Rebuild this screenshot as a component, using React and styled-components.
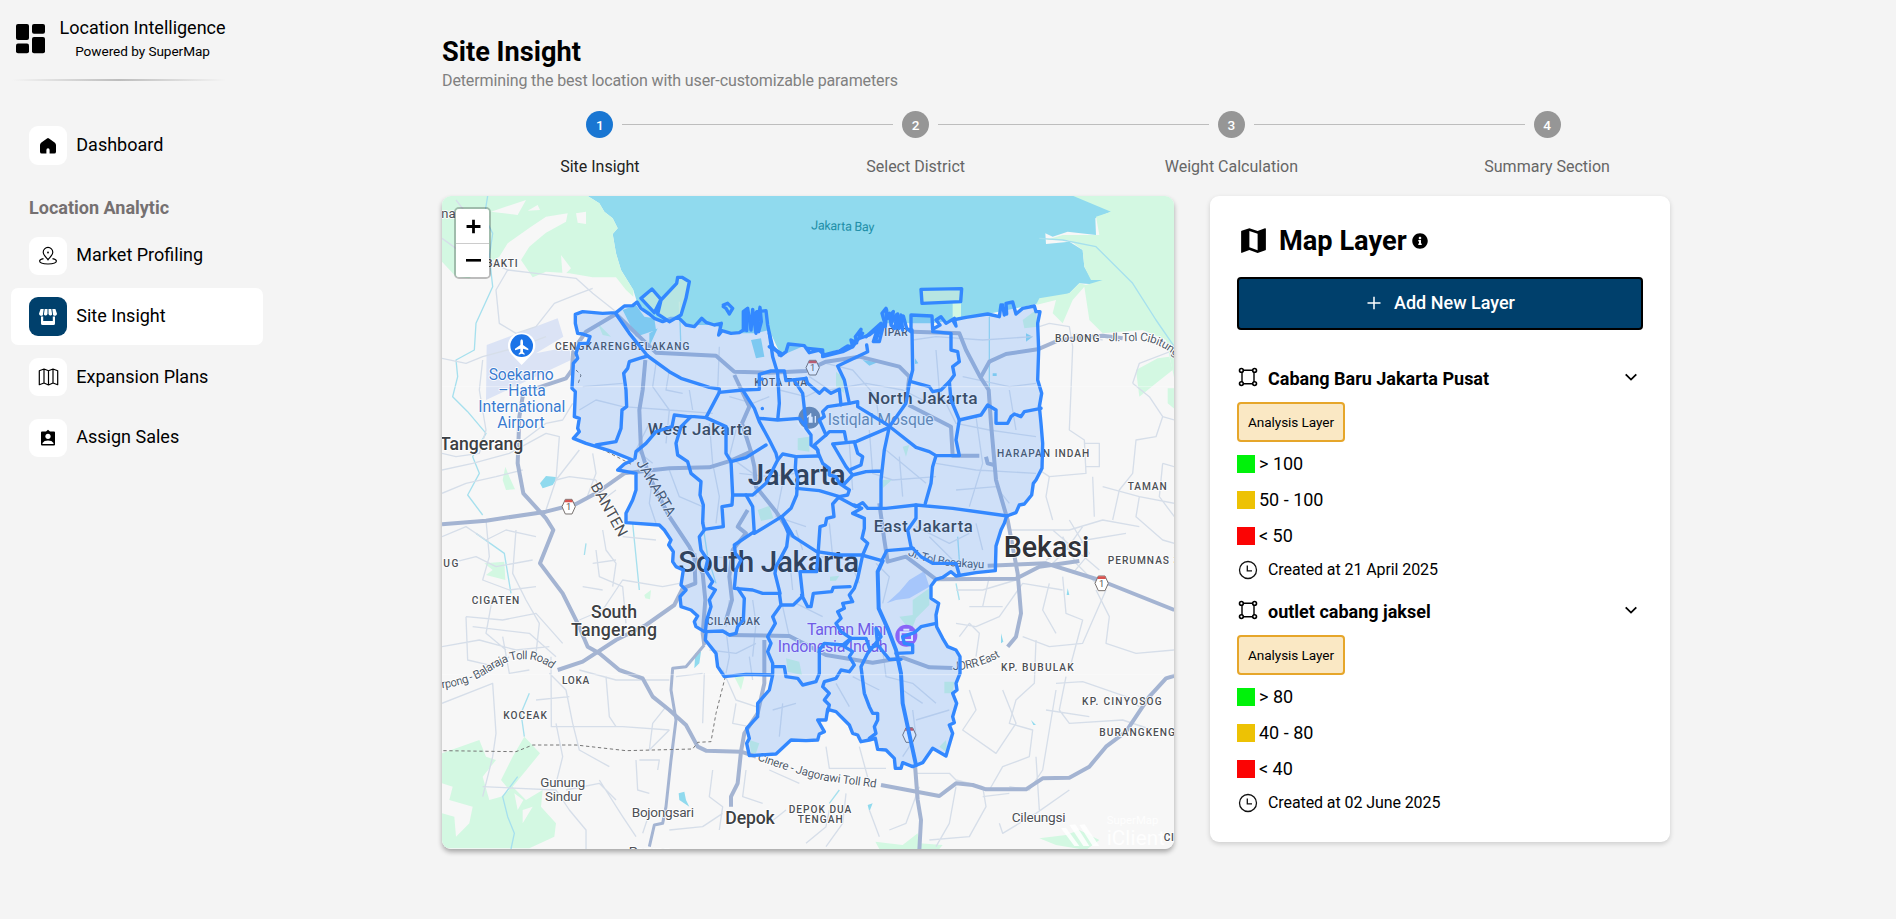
import React from "react";
import styled, { createGlobalStyle } from "styled-components";
import { MdMap } from "react-icons/md";
import { FaInfoCircle } from "react-icons/fa";

const GlobalStyle = createGlobalStyle`
  *, *::before, *::after { box-sizing: border-box; }
  body {
    margin: 0;
    background: #f4f4f4;
    color: #000;
    font-family: Roboto, "Liberation Sans", sans-serif;
    overflow: hidden;
  }
`;

/* ---------- Page shell ---------- */

const Page = styled.div`
  display: flex;
  height: 919px;
`;

const Sidebar = styled.aside`
  width: 442px;
  flex: none;
`;

const Brand = styled.div`
  display: flex;
  align-items: center;
  gap: 14.5px;
  height: 76px;
  padding: 1px 0 0 16px;
  svg { flex: none; }
`;

const BrandText = styled.div`
  display: flex;
  flex-direction: column;
  align-items: center;
  padding-top: 2px;
`;

const BrandName = styled.div`
  font-size: 18px;
  line-height: 24px;
`;

const BrandNote = styled.div`
  font-size: 13.6px;
  line-height: 23px;
  letter-spacing: -0.05px;
`;

const Divider = styled.div`
  width: 214px;
  height: 2px;
  margin: 3px 0 0 12px;
  background: linear-gradient(to right, transparent, #bdbdbd, transparent);
`;

const Nav = styled.nav`
  display: flex;
  flex-direction: column;
  gap: 3.6px;
  width: 263px;
  padding: 36px 0 0 11px;
`;

const NavHeading = styled.div`
  padding-left: 18px;
  margin: 16.6px 0 1.7px;
  height: 28px;
  line-height: 28px;
  font-size: 18px;
  font-weight: 700;
  color: #757071;
`;

const NavItem = styled.a`
  display: flex;
  align-items: center;
  gap: 9.3px;
  height: 57px;
  padding-left: 18px;
  border-radius: 7px;
  font-size: 18px;
  background: ${(p) => (p.$active ? "#fff" : "transparent")};
`;

const NavText = styled.span`
  padding-bottom: 2px;
`;

const NavIcon = styled.span`
  display: flex;
  align-items: center;
  justify-content: center;
  width: 38px;
  height: 38.5px;
  border-radius: 9px;
  color: ${(p) => (p.$active ? "#fff" : "#000")};
  background: ${(p) => (p.$active ? "#00406c" : "#fff")};
`;

const Main = styled.main`
  width: 1263px;
  padding-top: 36px;
`;

const Title = styled.h1`
  margin: 0;
  font-size: 27.2px;
  line-height: 32px;
  font-weight: 700;
`;

const Subtitle = styled.p`
  margin: 0;
  font-size: 16px;
  line-height: 25px;
  letter-spacing: -0.12px;
  color: #808080;
`;

/* ---------- Stepper ---------- */

const StepperRow = styled.div`
  display: flex;
  margin-top: 18px;
  height: 85px;
`;

const StepBox = styled.div`
  flex: 1;
  display: flex;
  flex-direction: column;
`;

const StepTrack = styled.div`
  display: flex;
  align-items: center;
  gap: 9px;
`;

const StepLine = styled.span`
  flex: 1;
  height: 1px;
  background: ${(p) => (p.$hidden ? "transparent" : "#bdbdbd")};
`;

const StepDot = styled.span`
  width: 27px;
  height: 27px;
  border-radius: 50%;
  font-size: 13.6px;
  font-weight: 500;
  line-height: 28px;
  text-align: center;
  color: #fff;
  background: ${(p) => (p.$active ? "#1976d2" : "#969696")};
`;

const StepLabel = styled.span`
  margin-top: 17px;
  font-size: 16px;
  line-height: 24px;
  text-align: center;
  color: ${(p) => (p.$active ? "#212121" : "#666")};
`;

/* ---------- Content ---------- */

const Content = styled.div`
  display: flex;
  align-items: flex-start;
  gap: 36px;
`;

const MapFrame = styled.div`
  position: relative;
  width: 732px;
  height: 653px;
  border-radius: 9px;
  overflow: hidden;
  box-shadow: 0 3px 5px rgba(0, 0, 0, 0.32);
  svg { display: block; }
`;

const ZoomControl = styled.div`
  position: absolute;
  left: 12px;
  top: 11px;
  width: 37px;
  border: 2px solid rgba(0, 0, 0, 0.24);
  border-radius: 5px;
  background-clip: padding-box;
  overflow: hidden;
`;

const ZoomButton = styled.button`
  display: flex;
  align-items: center;
  justify-content: center;
  width: 33px;
  height: 34px;
  padding: 0 0 0 2px;
  border: 0;
  background: #fff;
  & + & { border-top: 1px solid #ccc; }
`;

const Panel = styled.section`
  width: 460px;
  height: 646px;
  padding: 27px;
  border-radius: 9px;
  background: #fff;
  box-shadow: 0 2px 5px rgba(0, 0, 0, 0.16);
`;

const PanelTitle = styled.h2`
  display: flex;
  align-items: center;
  margin: 0 0 18px;
  height: 36px;
  font-size: 27.2px;
  font-weight: 700;
  svg { margin-top: -1px; }
`;

const PanelTitleText = styled.span`
  margin: 0 5px 0 9px;
`;

const AddButton = styled.button`
  display: flex;
  align-items: center;
  justify-content: center;
  gap: 13px;
  width: 406px;
  height: 53px;
  padding: 0 0 2px 2px;
  border: 2px solid #000;
  border-radius: 4px;
  background: #00406c;
  color: #fff;
  font: 500 18px Roboto, sans-serif;
`;

const Layers = styled.div`
  padding-top: 29px;
`;

const Layer = styled.article`
  height: 233.2px;
`;

const LayerHead = styled.div`
  display: flex;
  align-items: center;
  height: 36px;
  padding: 0 5px 0 1px;
`;

const LayerName = styled.h3`
  flex: 1;
  margin: 3px 0 0 10px;
  font-size: 18px;
  font-weight: 700;
`;

const Badge = styled.span`
  display: flex;
  align-items: center;
  justify-content: center;
  width: 108px;
  height: 40px;
  margin: 7px 0 4px;
  border: 2px solid #e6a62a;
  border-radius: 4px;
  background: #fae8c4;
  font-size: 13.6px;
  letter-spacing: -0.08px;
`;

const LegendRow = styled.div`
  display: flex;
  align-items: center;
  gap: 4px;
  height: 36px;
  font-size: 18px;
`;

const LegendText = styled.span`
  padding-bottom: 1.5px;
`;

const Swatch = styled.span`
  width: 18px;
  height: 18px;
  background: ${(p) => p.$color};
`;

const Created = styled.div`
  display: flex;
  align-items: center;
  gap: 10px;
  height: 32px;
  padding-left: 1px;
  font-size: 16px;
  letter-spacing: -0.09px;
`;

const CreatedText = styled.span`
  padding-bottom: 1.5px;
`;

/* ---------- Icons ---------- */

const DashboardIcon = () => (
  <svg width="29" height="30" viewBox="0 0 29 30">
    <rect width="13" height="16" rx="2" />
    <rect y="19.5" width="13" height="9.7" rx="2" />
    <rect x="16" width="13" height="9.7" rx="2" />
    <rect x="16" y="13" width="13" height="16.2" rx="2" />
  </svg>
);

const HomeIcon = () => (
  <svg width="20" height="20" viewBox="0 0 20 20" fill="currentColor">
    <path d="M9 2.4Q10 1.6 11 2.4L16.6 6.4Q18 7.4 18 9V15.7Q18 17.6 16.2 17.6H11.6V14Q11.6 12.3 10 12.3T8.4 14V17.6H3.8Q2 17.6 2 15.7V9Q2 7.4 3.4 6.4Z" />
  </svg>
);

const PinIcon = () => (
  <svg width="20" height="20" viewBox="0 0 20 20" fill="none" stroke="currentColor" strokeWidth="1.15">
    <path d="M10 13.800C8.200 11.400 5.200 8.900 5.200 6.200a4.800 4.800 0 0 1 9.600 0C14.800 8.900 11.800 11.400 10 13.800Z" />
    <circle cx="10" cy="6.500" r=".9" fill="currentColor" stroke="none" />
    <path d="M5.500 12.600C3.100 13.100 1.600 14 1.600 15.100C1.600 17 5 18 10 18S18.400 17 18.400 15.100C18.400 14 16.900 13.100 14.500 12.600" />
  </svg>
);

const StoreIcon = () => (
  <svg width="20" height="20" viewBox="0 0 20 20" fill="currentColor">
    <path d="M2.600 2H5.700L4.900 8A2.200 2.200 0 0 1 1 6.800Z" />
    <path d="M6.700 2H9.500V7A2 2 0 0 1 5.900 7.500Z" />
    <path d="M10.500 2H13.300L14.100 7.500A2 2 0 0 1 10.500 7Z" />
    <path d="M14.300 2H17.400L19 6.800A2.200 2.200 0 0 1 15.100 8Z" />
    <path d="M3 9.500H5.200V14H14.800V9.500H17V16.500Q17 18 15.500 18H4.500Q3 18 3 16.500Z" />
  </svg>
);

const MapOutlineIcon = () => (
  <svg width="21" height="20" viewBox="0 0 21 20" fill="none" stroke="currentColor" strokeWidth="1.2" strokeLinejoin="round">
    <path d="M1.300 3.800 6 2 10.500 3.800 15 2 19.700 3.800V17.700L15 16 10.500 18 6 16 1.300 17.700ZM6 2V16M10.500 3.800V18M15 2V16" />
  </svg>
);

const BadgeIcon = () => (
  <svg width="20" height="20" viewBox="0 0 20 20">
    <path fill="currentColor" d="M4 3.500H8L10 1.700 12 3.500H16Q17 3.500 17 4.500V16.500Q17 17.500 16 17.500H4Q3 17.500 3 16.500V4.500Q3 3.500 4 3.500Z" />
    <circle cx="10" cy="8.300" r="2.600" fill="#fff" />
    <path d="M4.500 16V15Q6 12.600 10 12.600T15.500 15V16Z" fill="#fff" />
  </svg>
);

const PolygonIcon = () => (
  <svg width="20" height="20" viewBox="0 0 20 20" fill="none" stroke="#000" strokeWidth="1.400">
    <path d="M5 3.200H15M5 16.800H15M4 5V15M16 5V15" />
    {[3.4, 16.6].map((x) => [3.4, 16.6].map((y) => (
      <circle key={`${x}-${y}`} cx={x} cy={y} r="1.9" strokeWidth="1.6" />
    )))}
  </svg>
);

const ClockIcon = () => (
  <svg width="20" height="20" viewBox="0 0 20 20" fill="none" stroke="#111" strokeWidth="1.3">
    <circle cx="10" cy="10" r="8.5" />
    <path d="M9.300 5.500V10.800H14" />
  </svg>
);

const ChevronIcon = () => (
  <svg width="14" height="12" viewBox="0 0 14 12" fill="none" stroke="#000" strokeWidth="1.8">
    <path d="M1.700 3.300 7 8.600 12.300 3.300" />
  </svg>
);

const PlusIcon = ({ size = 14, weight = 1.5 }) => (
  <svg width={size} height={size} viewBox="0 0 14 14" stroke="currentColor" strokeWidth={weight}>
    <path d="M7 .8V13.200M.5 7H13.500" />
  </svg>
);

/* ---------- Map ---------- */

const MapSvg = styled.svg`
  background: #f7f7f7;
  font-family: Roboto, sans-serif;
`;

const LabelText = styled.text`
  font-size: ${(p) => p.$size}px;
  font-weight: ${(p) => p.$weight};
  fill: ${(p) => p.$color};
  stroke: ${(p) => p.$halo || "#fff"};
  stroke-width: 5px;
  stroke-linejoin: round;
  paint-order: stroke;
`;

const Label = ({ x, y, w, size = 30.5, weight = 500, color = "#4d5055", halo, turn, children }) => (
  <LabelText x={x} y={y} textLength={w} $size={size} $weight={weight} $color={color} $halo={halo}
    transform={turn ? `rotate(${turn} ${x} ${y})` : undefined}>
    {children}
  </LabelText>
);

const PathLabel = ({ id, d, w, children }) => (
  <>
    <path id={id} d={d} fill="none" />
    <LabelText $size={35} $weight={400} $color="#4f5a68">
      <textPath href={`#${id}`} textLength={w}>{children}</textPath>
    </LabelText>
  </>
);

const Shield = ({ x, y }) => (
  <g transform={`translate(${x} ${y})`}>
    <path d="M-10-22H10L20 0 10 22H-10L-20 0Z" fill="#fff" stroke="#77716f" strokeWidth="3" />
    <path d="M-10-21H10L13-13H-13Z" fill="#d9534f" />
    <text y="11" textAnchor="middle" fontSize="28" fill="#555">1</text>
  </g>
);

const GREENS = [
  "M18 18H455L490 40 505 65 530 85 545 115 530 132 540 190 555 240 592 300 592 320 570 300 540 262 470 262 400 250 330 245 290 262 255 210 280 170 310 145 330 128 390 95 395 70 330 80 285 110 215 160 190 200 150 225 100 265 60 260 18 215Z",
  "M1912 18H2220V590L2205 520 2190 450 2120 420 2000 430 1960 390 1945 290 1910 330 1880 400 1850 370 1860 330 1800 345 1810 325 1900 310 1930 280 1950 285 2000 270 1965 270 1945 230 1940 180 1900 150 1830 150 1880 135 1990 135 1980 80 2025 65Z",
  "M2100 540 2165 505 2200 500 2210 540 2160 580 2110 620Z M2195 595H2220V660L2195 640Z",
  "M312 518 355 486 378 500 325 535Z M208 830 220 860 237 898 210 900 200 870Z M145 1120 205 1115 208 1170 150 1155 170 1140Z M625 1215 645 1200 642 1228 628 1225Z",
  "M18 1690 130 1650 150 1700 180 1710 140 1760 160 1830 195 1820 220 1800 195 1770 230 1700 265 1640 312 1690 230 1790 270 1830 320 1800 315 1850 360 1900 355 1940 280 1975H18Z",
  "M895 1460 925 1460 915 1500Z M1318 1955 1400 1965 1445 1930 1450 1960 1520 1965 1510 1977H1330Z M1810 1945 1890 1935 1930 1920 1990 1950 1950 1980 1860 1965Z",
  "M485 400 525 440 500 435Z M1550 340H1575V390H1550Z M1400 770 1420 765 1410 800Z M1340 870 1370 868 1340 895Z M965 960 1000 947 1012 985 975 993Z M1085 745 1120 740 1120 785 1085 780Z",
  "M1390 1280 1430 1275 1430 1230 1480 1195 1480 1245 1440 1285 1425 1325Z M1525 1475H1555L1550 1510 1525 1510Z M1510 1670 1530 1650 1535 1690Z M940 1650 970 1660 960 1690 945 1690Z M1050 1405 1090 1415 1098 1455 1055 1445Z M1200 545 1220 560 1225 610 1200 590Z M1760 390 1800 360 1805 410 1765 415Z M1182 1160 1210 1157 1200 1172 1182 1173Z",
];

const INLETS = [
  "M560 360 600 345 625 380 655 385 660 420 600 440 580 400Z M945 450 975 445 985 500 960 505Z M640 430 665 415 640 470Z",
  "M1280 510 1325 517 1300 527Z M1437 505 1447 520 1437 522Z M1670 550H1682V558H1670Z M1770 430 1790 440 1770 455Z",
  "M312 880 330 858 365 862 350 885 320 895Z M778 1390 795 1385 790 1420 775 1435Z M728 1810 745 1805 750 1830 760 1850 730 1830Z",
  "M1295 1845 1310 1840 1300 1865Z M1785 1590 1800 1605 1792 1605Z M1895 1195 1900 1215 1892 1215Z M1695 1330 1702 1355 1695 1360Z M1138 60 1160 57 1155 66Z",
];

const STREAMS = [
  "M155 18 145 80 170 130 160 200 170 290 120 400 115 480 60 510 65 560 50 620 95 665 150 730 110 800 130 850 95 915 140 975",
  "M1810 145 1880 150 1980 170 2090 280 2160 390 2215 470",
  "M730 335 735 480M590 1000 610 1200M120 1030 205 1090 225 1210M265 1640 255 1570 280 1510M245 1760 200 1820 215 1880 235 1930 225 1977",
  "M800 1000 815 1100 840 1180M1565 1040 1570 1110M450 1060 445 1095M1210 1800 1180 1840M1560 1180 1570 1230M1660 380 1660 650",
];

const MINOR = [
  "M18 145 60 175 105 205 160 215 215 240 300 250 420 265 470 310 540 365M215 240 180 300 190 400 240 430 300 410 355 340 430 310 470 295M60 30 110 95 160 80",
  "M18 505 90 520 140 500 250 470 330 440M140 510 130 600 150 720 130 790 60 800 18 790M18 840 110 820 220 790 330 730 370 740 360 870 400 860 480 870M250 760 330 700 380 690 410 640",
  "M18 910 90 880 180 860 260 840M330 960 360 870 430 780M480 870 500 930 540 900M470 790 480 850 450 930",
  "M440 590 560 580M430 660 480 630 560 650 700 660 830 670M660 520 650 590 700 660 690 760M700 540 690 600 740 610M640 700 600 780 650 820",
  "M760 600 770 660M850 470 845 600M880 620 950 640 1000 620M820 700 830 820 850 920 840 1000M900 720 880 800 950 850 960 920",
  "M650 860 640 940 660 1000M700 840 730 920 800 950M910 850 1000 860 1080 850M1030 600 1110 620 1150 600M1040 880 1020 980 1110 1010",
  "M1120 560 1180 600 1290 580 1400 600 1480 640M1170 520 1250 540 1320 620 1330 700M1430 450 1500 440 1640 450 1790 440M1580 560 1720 590 1800 580M1500 480 1510 600 1560 700 1660 720 1800 740",
  "M1240 760 1250 900M1300 720 1310 850 1370 870 1500 860M1350 780 1470 880M1390 800 1400 920M1500 820 1620 840 1800 850M1620 680 1640 820 1600 950M1720 600 1740 720M1560 900 1680 890 1720 940",
  "M1810 410 1840 400 1900 410 1910 470 1905 600 1900 720 1945 750 1950 850 1840 860 1810 840M1945 760H1990V830H1950",
  "M1910 430 2000 450M2090 580 2110 520 2215 480M2090 580 2140 620 2180 680 2160 740 2100 750 2090 850 2050 900 2030 990M2180 680 2215 690M1840 860 1830 920 1850 990",
  "M1970 860 1975 980M2000 890 2110 920 2215 940M2110 920 2100 980 2180 1050 2215 1060M2180 820 2215 830M2180 820 2170 920 2215 980",
  "M1720 1020 1900 1020 2000 990 2110 1010M1880 1040 1920 1120 1980 1180M1940 1010 1890 1080 1840 1130M1900 990 1960 1090 1910 1150M1850 1020 1990 1140M1830 1110 1950 1050 2070 1030",
  "M1560 1300 1620 1310 1690 1280 1760 1180 1880 1200M1570 1340 1600 1300 1630 1330 1620 1400M1760 1340 1840 1370 1940 1360 2010 1200M1880 1160 1890 1270 1940 1290 1900 1440",
  "M1980 1200 2020 1280 2010 1360 2100 1390 2215 1380M1560 1200 1640 1200 1740 1170M1600 1250 1700 1250M1660 1160 1640 1250M1840 1180 1820 1260 1860 1330",
  "M1800 1350 1795 1480 1740 1530 1720 1600 1790 1620 1780 1700 1700 1730 1660 1800M1860 1500 1840 1620 1820 1740 1780 1800 1720 1790",
  "M1890 1460 1870 1560 1900 1600 2060 1590 2150 1620M1860 1480 1940 1475 2070 1520 2110 1550M1830 1560 1960 1580M1600 1500 1620 1560 1580 1620 1680 1690 1740 1600 1700 1500",
  "M1440 1750 1540 1750 1560 1770 1640 1790 1650 1850 1600 1940 1480 1950M1640 1820 1720 1810M1560 1790 1540 1900 1500 1970M1690 1900 1700 1930 1800 1870 1900 1800M1800 1700 1810 1860",
  "M1170 1670 1180 1735 1350 1735M1270 1670 1300 1780M1180 1860 1170 1910 1110 1960M1230 1810 1220 1900 1170 1970M1300 1860 1330 1940M1360 1920 1410 1900 1450 1790",
  "M18 1040 90 1010 150 1050 210 1020 300 1040M150 990 160 1100 140 1170 220 1200 300 1190M40 1120 120 1100 180 1130 290 1110M240 1020 230 1150 270 1230 310 1300 300 1390",
  "M90 1280 200 1290 300 1270 380 1360M90 1280 95 1410 180 1430 220 1400M18 1370 130 1350 240 1380 340 1370M170 1220 150 1330 210 1380M200 1340 220 1450 280 1440M110 1310 280 1330 360 1400",
  "M430 1290 500 1260 560 1170 680 1190 730 1180M500 1020 510 1080 540 1120 530 1190M560 1040 660 1050M480 1080 490 1160 560 1190 570 1300M440 1190 500 1200M470 1120 540 1110",
  "M345 1400 346 1610 560 1610 700 1620M340 1450 390 1500 410 1600 430 1680 520 1730M510 1460 520 1580 540 1610M300 1530 400 1520M430 1440 540 1470 700 1470",
  "M18 1540 170 1480 180 1630 170 1700 140 1820M140 1790 360 1800 400 1860 450 1920 450 1977M360 1780 380 1700 360 1600M490 1770 560 1880 600 1940M390 1800 490 1780 540 1830",
  "M610 1710 670 1710 665 1740M600 1710 605 1800 640 1810M700 1620 640 1680 650 1600 690 1550M830 1740 820 1820 860 1850 850 1920M640 1870 620 1930M700 1920 800 1910 860 1870",
  "M860 1440 900 1530 960 1550M820 1380 900 1390 960 1360M870 1320 880 1400 870 1450M940 1400 950 1470M805 1450 800 1600M720 1460 800 1450M900 1540 890 1600 940 1610",
  "M950 1230 960 1300 950 1400M1040 1250 1060 1340M1060 1100 1070 1200M840 1100 900 1110M880 1230 870 1310M1010 1560 1080 1540M1040 1540 1030 1640M1080 1240 1160 1280",
  "M1320 1120 1360 1160 1340 1240M1340 1380 1350 1460 1430 1480 1500 1540M1430 1560 1440 1640 1400 1700M1440 1590 1540 1560M1250 1460 1330 1500M1200 1480 1240 1550M1390 1420 1400 1500 1460 1540",
  "M1150 1100 1240 1110 1270 1180M1440 1010 1540 1060 1600 1030M1480 1040 1560 1120M1620 1000 1640 1080M1080 1020 1100 1080M1180 1000 1190 1100M1000 1740 1090 1780M1000 1900 1050 1860M930 1740 920 1820 980 1840",
];

const HIGHWAYS = [
  "M18 1003 150 992 330 965 420 942 480 910 565 850 700 835 820 832 885 812 945 785 955 830 960 890 1020 965 1070 1040",
  "M300 595 390 565 408 540 412 480 450 425 540 372 600 430 660 488 840 497 895 545 1000 548 1110 543 1170 515 1270 500 1390 530 1420 560 1415 600",
  "M628 510 620 600 610 660 615 780 640 860 700 980 760 1070 800 1150 808 1230 800 1330 805 1365",
  "M265 590 250 680 245 820 262 910 330 985 352 1020 312 1120 380 1210 425 1300 455 1370 490 1390 550 1440 620 1465 650 1520 700 1560 750 1605 785 1670 810 1682 915 1685 960 1700",
  "M775 1090 778 1180 740 1195 715 1245 630 1305 540 1350 440 1415 365 1440",
  "M895 555 940 650 918 700 945 785",
  "M915 1685 905 1780 885 1820 885 1850",
  "M935 960 905 1010 930 1030 890 1080 880 1160 888 1230 870 1290",
  "M880 1335 1060 1338 1170 1395 1310 1418 1400 1403 1480 1432 1550 1434",
  "M985 1350 985 1480 965 1570 925 1630 915 1685",
  "M1715 1370 1740 1340 1755 1270 1745 1150 1715 990 1680 870 1665 700 1658 600 1632 560 1590 480 1570 430 1430 425",
  "M1635 560 1660 515 1710 492 1805 478 1870 450 2000 437 2060 445",
  "M1418 645 1545 710 1550 797 1630 797M1650 800 1655 820 1675 825",
  "M1330 940 1345 1050 1355 1115 1410 1100 1450 1130 1500 1168 1740 1166 1810 1130 1930 1113",
  "M1655 1127 1830 1120 1990 1170 2215 1260",
  "M1335 1785 1510 1818 1560 1780 1610 1785 1650 1798 1770 1798 1820 1765 1900 1763 1960 1730 2010 1670 2070 1625 2140 1520 2190 1465 2220 1456",
  "M1437 1725 1445 1830 1455 1890 1450 1980",
];

const OUTLINE =
  "M418 373 440 365 500 370 540 368 565 348 590 347 603 336 615 355 640 372 655 385 680 395 705 385 730 385 750 405 775 410 797 385 810 397 835 405 856 400 848 435 858 422 885 430 910 428 922 420 922 365 935 355 945 420 950 358 960 430 972 352 976 395 968 425 955 395 962 365 990 362 995 405 1000 430 1010 470 1035 497 1050 485 1057 462 1105 467 1120 488 1150 480 1165 495 1210 483 1235 468 1250 470 1245 450 1262 458 1258 440 1275 418 1270 445 1300 435 1325 415 1312 455 1330 455 1345 395 1338 370 1350 355 1355 385 1372 365 1365 405 1375 415 1385 372 1390 415 1402 378 1412 415 1425 425 1425 375 1488 378 1490 418 1512 405 1500 390 1515 380 1530 400 1555 385 1560 408 1550 390 1590 382 1655 372 1690 380 1695 345 1712 372 1710 340 1730 336 1740 372 1760 355 1795 348 1800 365 1812 365 1805 400 1808 480 1805 570 1817 610 1810 650 1815 700 1820 760 1818 835 1800 870 1792 880 1787 915 1765 942 1750 945 1740 968 1712 978 1705 1000 1695 1020 1680 1068 1678 1142 1620 1148 1560 1158 1545 1145 1520 1162 1500 1168 1485 1188 1485 1225 1508 1240 1500 1275 1502 1310 1520 1345 1535 1370 1560 1380 1572 1400 1572 1450 1560 1480 1563 1500 1550 1510 1562 1540 1550 1580 1555 1598 1540 1605 1550 1630 1538 1670 1530 1698 1490 1675 1460 1718 1430 1730 1400 1718 1395 1735 1378 1735 1375 1705 1350 1680 1325 1678 1318 1645 1300 1650 1275 1655 1265 1635 1250 1630 1240 1605 1225 1590 1200 1565 1175 1558 1170 1590 1145 1590 1165 1625 1150 1632 1145 1650 1110 1652 1065 1650 1020 1692 940 1697 932 1660 940 1645 932 1615 965 1580 965 1540 1000 1500 1010 1455 930 1453 865 1460 845 1430 840 1390 808 1350 810 1328 780 1310 775 1295 785 1278 765 1260 735 1250 732 1220 750 1200 735 1185 742 1140 720 1130 710 1115 712 1085 698 1065 705 1050 685 1020 670 1005 570 998 570 970 590 930 600 900 600 850 545 840 565 822 590 810 520 782 450 760 412 745 430 725 425 715 430 685 415 680 418 605 408 595 412 520 425 505 420 490 430 460 455 460 462 440 440 432 425 430 418 400Z";

const ISLANDS =
  "M615 325 648 297 675 328 655 368Z M665 372 675 330 722 280 725 262 738 262 760 275 750 325 735 375 700 395Z M1455 298 1577 296 1574 335 1458 340Z";

const BORDERS = [
  "M540 372 580 430 635 498 700 545 735 565 820 592 850 597 850 607 920 600 970 598 970 553 1005 543 1045 543 1050 572 1110 565",
  "M635 498 610 505 580 515 575 535 563 550 570 600 572 650 558 660 555 715 540 755 480 765",
  "M597 805 600 785 630 760 660 725 708 710 715 675 755 680 775 680 810 683 870 710 870 790 885 815 930 803 990 765M850 607 810 683",
  "M765 680 735 710 720 760 725 795 755 815 765 850 795 875 792 915 802 945 800 998M920 600 955 655 970 695 1000 750 1020 790 1025 810 990 880 950 915 890 915 885 815",
  "M890 915 888 945 858 950 862 1010 805 1018M1025 810 1040 792 1080 800 1145 798M1080 800 1078 835 1085 865 1082 915 1065 955 1037 980 955 1030 950 950 930 915",
  "M970 685 1025 690 1090 685 1110 710M1000 430 1010 500 1025 550 1030 640 1025 690M1075 572 1100 610 1110 700",
  "M1110 565 1115 580 1150 610 1165 595 1185 610 1210 598 1215 645M1295 485 1292 465M1295 485 1205 528 1225 570 1240 640 1175 650 1160 665 1165 680 1150 690 1170 735 1135 765 1145 780 1150 800 1145 785 1160 820 1180 835 1180 855 1200 860 1210 880 1240 900 1235 915 1210 920 1150 902 1082 895",
  "M1240 640 1265 635 1265 650 1355 705 1440 772 1480 785 1500 797 1570 797 1560 750 1570 690 1545 630 1540 575 1515 600 1490 605 1480 590 1425 575",
  "M1428 420 1430 540 1420 580 1410 640 1360 710 1345 780 1335 870 1335 950M1360 712 1260 755 1190 762 1230 830 1250 855 1290 845 1335 843M1255 755 1265 790 1280 800 1275 825 1245 838M1250 855 1222 885",
  "M1500 797 1490 830 1485 880 1468 940M1210 923 1260 950 1280 938 1295 955 1350 955 1440 945 1550 955 1715 978M1490 425 1545 430 1545 480 1565 485 1570 515 1550 530 1555 555 1540 575",
  "M1570 690 1635 675 1655 645 1680 660 1680 700 1715 700 1725 680 1735 672 1755 680 1765 665 1815 655M1110 715 1125 735 1125 765 1145 780M1170 735 1180 725 1225 725 1230 750",
  "M800 998 805 1020 790 1040 795 1080 815 1110 808 1140 830 1175 820 1190 838 1200 820 1230 825 1250 812 1290 808 1325M955 1025 895 1065 898 1090 915 1110 900 1140 895 1195 950 1200 980 1210 1030 1210 1035 1245 1010 1280 1018 1300 995 1340 1005 1360 995 1385 1010 1420 1010 1450",
  "M1037 980 1057 1030 1052 1070 1020 1130 1017 1150 1032 1210M1037 980 1072 1040 1142 1085 1210 1095 1277 1095 1337 1112 1352 1082 1432 1075M905 1195 925 1225 922 1290 905 1310 900 1330 880 1335 860 1323 808 1325",
  "M1207 923 1190 942 1194 980 1172 985 1168 1005 1152 1010 1147 1080 1142 1145 1092 1145 1100 1218 1072 1245 1037 1245M1097 1215 1115 1250 1125 1250 1132 1210 1187 1205 1192 1192 1242 1190",
  "M1010 1430 1045 1430 1050 1460 1085 1465 1100 1485 1140 1475 1150 1450 1150 1380 1165 1360 1220 1365",
  "M1255 945 1277 955 1250 970 1285 985 1285 1015 1278 1045 1295 1060 1280 1095 1265 1165 1255 1195 1240 1215 1250 1235 1220 1240 1225 1255 1205 1265 1215 1285 1200 1300 1215 1325 1245 1345 1220 1365",
  "M1245 1345 1290 1345 1300 1375 1325 1365 1320 1315 1335 1340 1295 1390 1275 1430 1285 1510 1300 1550 1310 1570 1325 1570 1325 1590 1315 1610 1320 1630 1300 1645M1325 1365 1360 1408 1395 1408",
  "M1245 1345 1225 1370 1250 1385 1240 1400 1255 1425 1240 1445 1215 1440 1200 1465 1165 1475 1160 1490 1180 1510 1165 1530 1180 1545 1175 1565",
  "M1440 945 1440 985 1415 1020 1425 1070 1455 1100 1490 1120 1560 1120 1570 1155M1380 1390 1430 1388 1430 1365 1405 1360 1400 1340 1435 1328 1455 1310 1500 1300",
];

const SHORE_DETAIL = [
  "M925 365V420M932 358V422M862 345 875 340 890 355 880 372 870 355 862 350M978 567V568M979 655V656M1000 470 1035 490 1030 495",
  "M1115 475 1160 480 1160 500 1220 485 1250 470 1280 430M1290 440 1335 400 1320 450 1335 410M1352 360 1348 410M1360 370 1365 400 1380 375 1382 415 1395 375 1400 420M1700 345 1705 375",
];

const JakartaMap = () => (
  <MapSvg width="732" height="653" viewBox="18 18 2196 1959">
    <path fill="#90daee" d="M455 18 490 40 505 65 530 85 545 115 530 132 540 190 555 240 592 300 603 336 640 372 680 395 730 385 750 405 835 405 885 430 960 430 1000 420 1035 497 1105 467 1165 495 1250 460 1345 400 1490 400 1655 372 1810 340 1900 310 1930 280 2000 285 2025 275 1965 265 1945 230 1940 180 1900 155 1830 162 1828 130 1850 140 1895 125 1980 135 1978 85 2025 65 2015 25 2010 18Z" />
    <g fill="#d3f8e2">{GREENS.map((d) => <path key={d} d={d} />)}</g>
    <path fill="#f7f7f7" d="M165 65 270 30 245 75ZM275 62 305 45 312 60ZM420 70 450 65 450 102 425 98ZM375 195 405 235 380 260ZM18 1780 50 1790 40 1830 110 1850 100 1900 60 1940 55 1880 18 1870ZM235 1810 262 1830 245 1860ZM260 1860 290 1850 260 1900Z" />
    <path fill="#dbe3f5" d="M152 465 365 385 382 440 300 490 400 470 405 510 150 630Z" />
    <path fill="#c3d6fa" d="M1352 1240 1390 1205 1420 1170 1465 1143 1480 1190 1420 1225 1380 1230Z" />
    <g fill="#90daee">{INLETS.map((d) => <path key={d} d={d} />)}</g>
    <g fill="none" stroke="#a6e0ee" strokeWidth="4" strokeLinejoin="round">
      {STREAMS.map((d) => <path key={d} d={d} />)}
    </g>
    <g fill="none" stroke="#d6dee9" strokeWidth="4" strokeLinejoin="round">
      {MINOR.map((d) => <path key={d} d={d} />)}
    </g>
    <g fill="none" stroke="#a4b4d2" strokeWidth="12" strokeLinejoin="round">
      {HIGHWAYS.map((d) => <path key={d} d={d} />)}
      <path strokeWidth="9" d="M805 1365 750 1430 710 1435 705 1500 720 1590 705 1710 690 1850 680 1900 655 1905 640 1970" />
    </g>
    <path fill="none" stroke="#777" strokeWidth="3" strokeDasharray="10 8" d="M22 1682 240 1685 290 1665 420 1665 570 1682 770 1677 785 1657 825 1655 840 1570 868 1460M480 768 590 825M420 540 435 555 425 585" />

    <Label x={16} y={85} size={39} weight={400}>na</Label>
    <Label x={150} y={231} w={95}>BAKTI</Label>
    <Label x={1125} y={118} w={190} size={38} weight={400} color="#1f8fa8" halo="#90daee" turn={2}>Jakarta Bay</Label>
    <Label x={357} y={481} w={403}>CENGKARENGBELAKANG</Label>
    <Label x={158} y={571} w={195} size={47} weight={400} color="#397bd0">Soekarno</Label>
    <Label x={187} y={619} w={142} size={47} weight={400} color="#397bd0">–Hatta</Label>
    <Label x={127} y={666} w={261} size={47} weight={400} color="#397bd0">International</Label>
    <Label x={184} y={713} w={142} size={47} weight={400} color="#397bd0">Airport</Label>
    <Label x={12} y={780} w={250} size={53} color="#3c4043">Tangerang</Label>
    <Label x={635} y={736} w={313} size={51} color="#3c4043">West Jakarta</Label>
    <Label x={955} y={588} w={158}>KOTA TUA</Label>
    <Label x={600} y={818} w={190} size={44} weight={400} turn={60}>JAKARTA</Label>
    <Label x={463} y={888} w={178} size={46} weight={400} turn={61}>BANTEN</Label>
    <Label x={1295} y={642} w={330} size={52} color="#3c4043">North Jakarta</Label>
    <Label x={1175} y={706} w={318} size={47} weight={400} color="#6c88a6">Istiqlal Mosque</Label>
    <Label x={1345} y={437} w={70}>IPAR</Label>
    <Label x={1857} y={457} w={133}>BOJONG</Label>
    <Label x={1683} y={801} w={277}>HARAPAN INDAH</Label>
    <Label x={2075} y={899} w={117}>TAMAN</Label>
    <Label x={935} y={885} w={294} size={89} color="#303238">Jakarta</Label>
    <Label x={727} y={1147} w={543} size={89} color="#303238">South Jakarta</Label>
    <Label x={1313} y={1025} w={297} size={50} color="#3c4043">East Jakarta</Label>
    <Label x={1703} y={1100} w={257} size={86} color="#303238">Bekasi</Label>
    <Label x={2015} y={1122} w={215}>PERUMNAS 3</Label>
    <Label x={22} y={1131} w={45}>UG</Label>
    <Label x={107} y={1242} w={143}>CIGATEN</Label>
    <Label x={465} y={1283} w={138} size={53} color="#3c4043">South</Label>
    <Label x={405} y={1338} w={258} size={53} color="#3c4043">Tangerang</Label>
    <Label x={378} y={1482} w={82}>LOKA</Label>
    <Label x={202} y={1587} w={131}>KOCEAK</Label>
    <Label x={812} y={1304} w={160}>CILANDAK</Label>
    <Label x={1113} y={1336} w={238} size={48} weight={400} color="#8150df">Taman Mini</Label>
    <Label x={1025} y={1385} w={330} size={48} weight={400} color="#8150df">Indonesia Indah</Label>
    <Label x={1695} y={1443} w={218}>KP. BUBULAK</Label>
    <Label x={1938} y={1544} w={239}>KP. CINYOSOG</Label>
    <Label x={1990} y={1638} w={227}>BURANGKENG</Label>
    <Label x={313} y={1792} w={135} size={40} weight={400}>Gunung</Label>
    <Label x={327} y={1832} w={111} size={40} weight={400}>Sindur</Label>
    <Label x={587} y={1882} w={187} size={41} weight={400}>Bojongsari</Label>
    <Label x={868} y={1903} w={148} size={53} color="#3c4043">Depok</Label>
    <Label x={578} y={1998} w={124} size={41} weight={400}>Parung</Label>
    <Label x={1058} y={1868} w={188}>DEPOK DUA</Label>
    <Label x={1085} y={1898} w={135}>TENGAH</Label>
    <Label x={1727} y={1895} w={162} size={41} weight={400}>Cileungsi</Label>
    <Label x={2183} y={1952} w={52}>CIB</Label>
    <PathLabel id="balaraja" w={355} d="M18 1495Q100 1485 160 1445T260 1408Q315 1405 362 1450L380 1470">rpong - Balaraja Toll Road</PathLabel>
    <PathLabel id="cibitung" w={215} d="M2018 453Q2080 455 2110 452Q2170 455 2230 510">Jl. Tol Cibitung</PathLabel>
    <PathLabel id="jorr" w={150} d="M1550 1440Q1630 1440 1710 1390">JORR East</PathLabel>
    <PathLabel id="becakayu" w={235} d="M1415 1095Q1490 1133 1660 1135">Jl. Tol Becakayu</PathLabel>
    <PathLabel id="cinere" w={368} d="M963 1710Q1070 1750 1170 1773L1350 1797">Cinere - Jagorawi Toll Rd</PathLabel>

    <Shield x={398} y={950} />
    <Shield x={1130} y={533} />
    <Shield x={1997} y={1180} />
    <Shield x={1420} y={1635} />

    <path d="M257 432A35 35 0 0 1 284 492L257 520 230 492A35 35 0 0 1 257 432Z" fill="#fff" stroke="#fff" strokeWidth="7" />
    <circle cx="257" cy="467" r="34" fill="#1a73e8" />
    <path d="M257 448Q261 448 261 456V465L277 476V481L261 476V486L266 491V494L257 491 248 494V491L253 486V476L237 481V476L253 465V456Q253 448 257 448Z" fill="#fff" />
    <path d="M1120 655A33 33 0 0 1 1146 712L1120 735 1094 712A33 33 0 0 1 1120 655Z" fill="#fff" opacity=".8" />
    <circle cx="1120" cy="683" r="33" fill="#6e88a8" />
    <path d="M1110 698V684L1120 676V698M1128 698V680M1138 698V678M1124 670V698" fill="none" stroke="#fff" strokeWidth="4" />
    <circle cx="1411" cy="1337" r="33" fill="#a05cf5" />
    <path d="M1394 1327H1428V1350H1394ZM1402 1319H1420" fill="none" stroke="#fff" strokeWidth="6" />

    <g stroke="#3388ff" strokeWidth="10.2" strokeLinejoin="round" strokeLinecap="round" fill="none">
      <path d={OUTLINE} fill="#3388ff" fillOpacity=".2" />
      <path d={ISLANDS} fill="#f6f7d0" fillOpacity=".38" />
      {BORDERS.map((d) => <path key={d} d={d} />)}
      {SHORE_DETAIL.map((d) => <path key={d} d={d} />)}
      <path strokeWidth="12" d="M1340 1113 1325 1145 1328 1255 1355 1315 1380 1380 1395 1450 1400 1540 1415 1610 1440 1725" />
    </g>
    <path d="M18 590H2214M18 1454H2214" stroke="#fff" strokeWidth="2" opacity=".6" />

    <g fill="#fff" opacity=".85">
      <path d="M1875 1915 1890 1913 1930 1968H1915ZM1900 1905 1918 1903 1960 1968H1942ZM1930 1905 1946 1903 1990 1968H1970Z" />
      <text x="2012" y="1901" fontSize="34" textLength="155">SuperMap</text>
      <text x="2012" y="1964" fontSize="62" textLength="175">iClient</text>
    </g>
  </MapSvg>
);

/* ---------- Data ---------- */

const ANALYTIC_ITEMS = [
  { label: "Market Profiling", Icon: PinIcon },
  { label: "Site Insight", Icon: StoreIcon, active: true },
  { label: "Expansion Plans", Icon: MapOutlineIcon },
  { label: "Assign Sales", Icon: BadgeIcon },
];

const STEPS = ["Site Insight", "Select District", "Weight Calculation", "Summary Section"];
const COLORS = ["#00f20a", "#edc204", "#fb0404"];

const LAYERS = [
  { name: "Cabang Baru Jakarta Pusat", ranges: ["> 100", "50 - 100", "< 50"], created: "21 April 2025" },
  { name: "outlet cabang jaksel", ranges: ["> 80", "40 - 80", "< 40"], created: "02 June 2025" },
];

const NavLink = ({ label, Icon, active }) => (
  <NavItem $active={active}>
    <NavIcon $active={active}><Icon /></NavIcon>
    <NavText>{label}</NavText>
  </NavItem>
);

export default function App() {
  return (
    <Page>
      <GlobalStyle />
      <Sidebar>
        <Brand>
          <DashboardIcon />
          <BrandText>
            <BrandName>Location Intelligence</BrandName>
            <BrandNote>Powered by SuperMap</BrandNote>
          </BrandText>
        </Brand>
        <Divider />
        <Nav>
          <NavLink label="Dashboard" Icon={HomeIcon} />
          <NavHeading>Location Analytic</NavHeading>
          {ANALYTIC_ITEMS.map((item) => <NavLink key={item.label} {...item} />)}
        </Nav>
      </Sidebar>
      <Main>
        <Title>Site Insight</Title>
        <Subtitle>Determining the best location with user-customizable parameters</Subtitle>
        <StepperRow>
          {STEPS.map((label, i) => (
            <StepBox key={label}>
              <StepTrack>
                <StepLine $hidden={i === 0} />
                <StepDot $active={i === 0}>{i + 1}</StepDot>
                <StepLine $hidden={i === STEPS.length - 1} />
              </StepTrack>
              <StepLabel $active={i === 0}>{label}</StepLabel>
            </StepBox>
          ))}
        </StepperRow>
        <Content>
          <MapFrame>
            <JakartaMap />
            <ZoomControl>
              <ZoomButton aria-label="Zoom in"><PlusIcon size={15} weight={2.6} /></ZoomButton>
              <ZoomButton aria-label="Zoom out">
                <svg width="15" height="3"><rect width="15" height="2.6" /></svg>
              </ZoomButton>
            </ZoomControl>
          </MapFrame>
          <Panel>
            <PanelTitle>
              <MdMap size={33} />
              <PanelTitleText>Map Layer</PanelTitleText>
              <FaInfoCircle size={16} />
            </PanelTitle>
            <AddButton><PlusIcon />Add New Layer</AddButton>
            <Layers>
              {LAYERS.map((layer) => (
                <Layer key={layer.name}>
                  <LayerHead>
                    <PolygonIcon />
                    <LayerName>{layer.name}</LayerName>
                    <ChevronIcon />
                  </LayerHead>
                  <Badge>Analysis Layer</Badge>
                  {layer.ranges.map((range, i) => (
                    <LegendRow key={range}>
                      <Swatch $color={COLORS[i]} />
                      <LegendText>{range}</LegendText>
                    </LegendRow>
                  ))}
                  <Created>
                    <ClockIcon />
                    <CreatedText>Created at {layer.created}</CreatedText>
                  </Created>
                </Layer>
              ))}
            </Layers>
          </Panel>
        </Content>
      </Main>
    </Page>
  );
}
